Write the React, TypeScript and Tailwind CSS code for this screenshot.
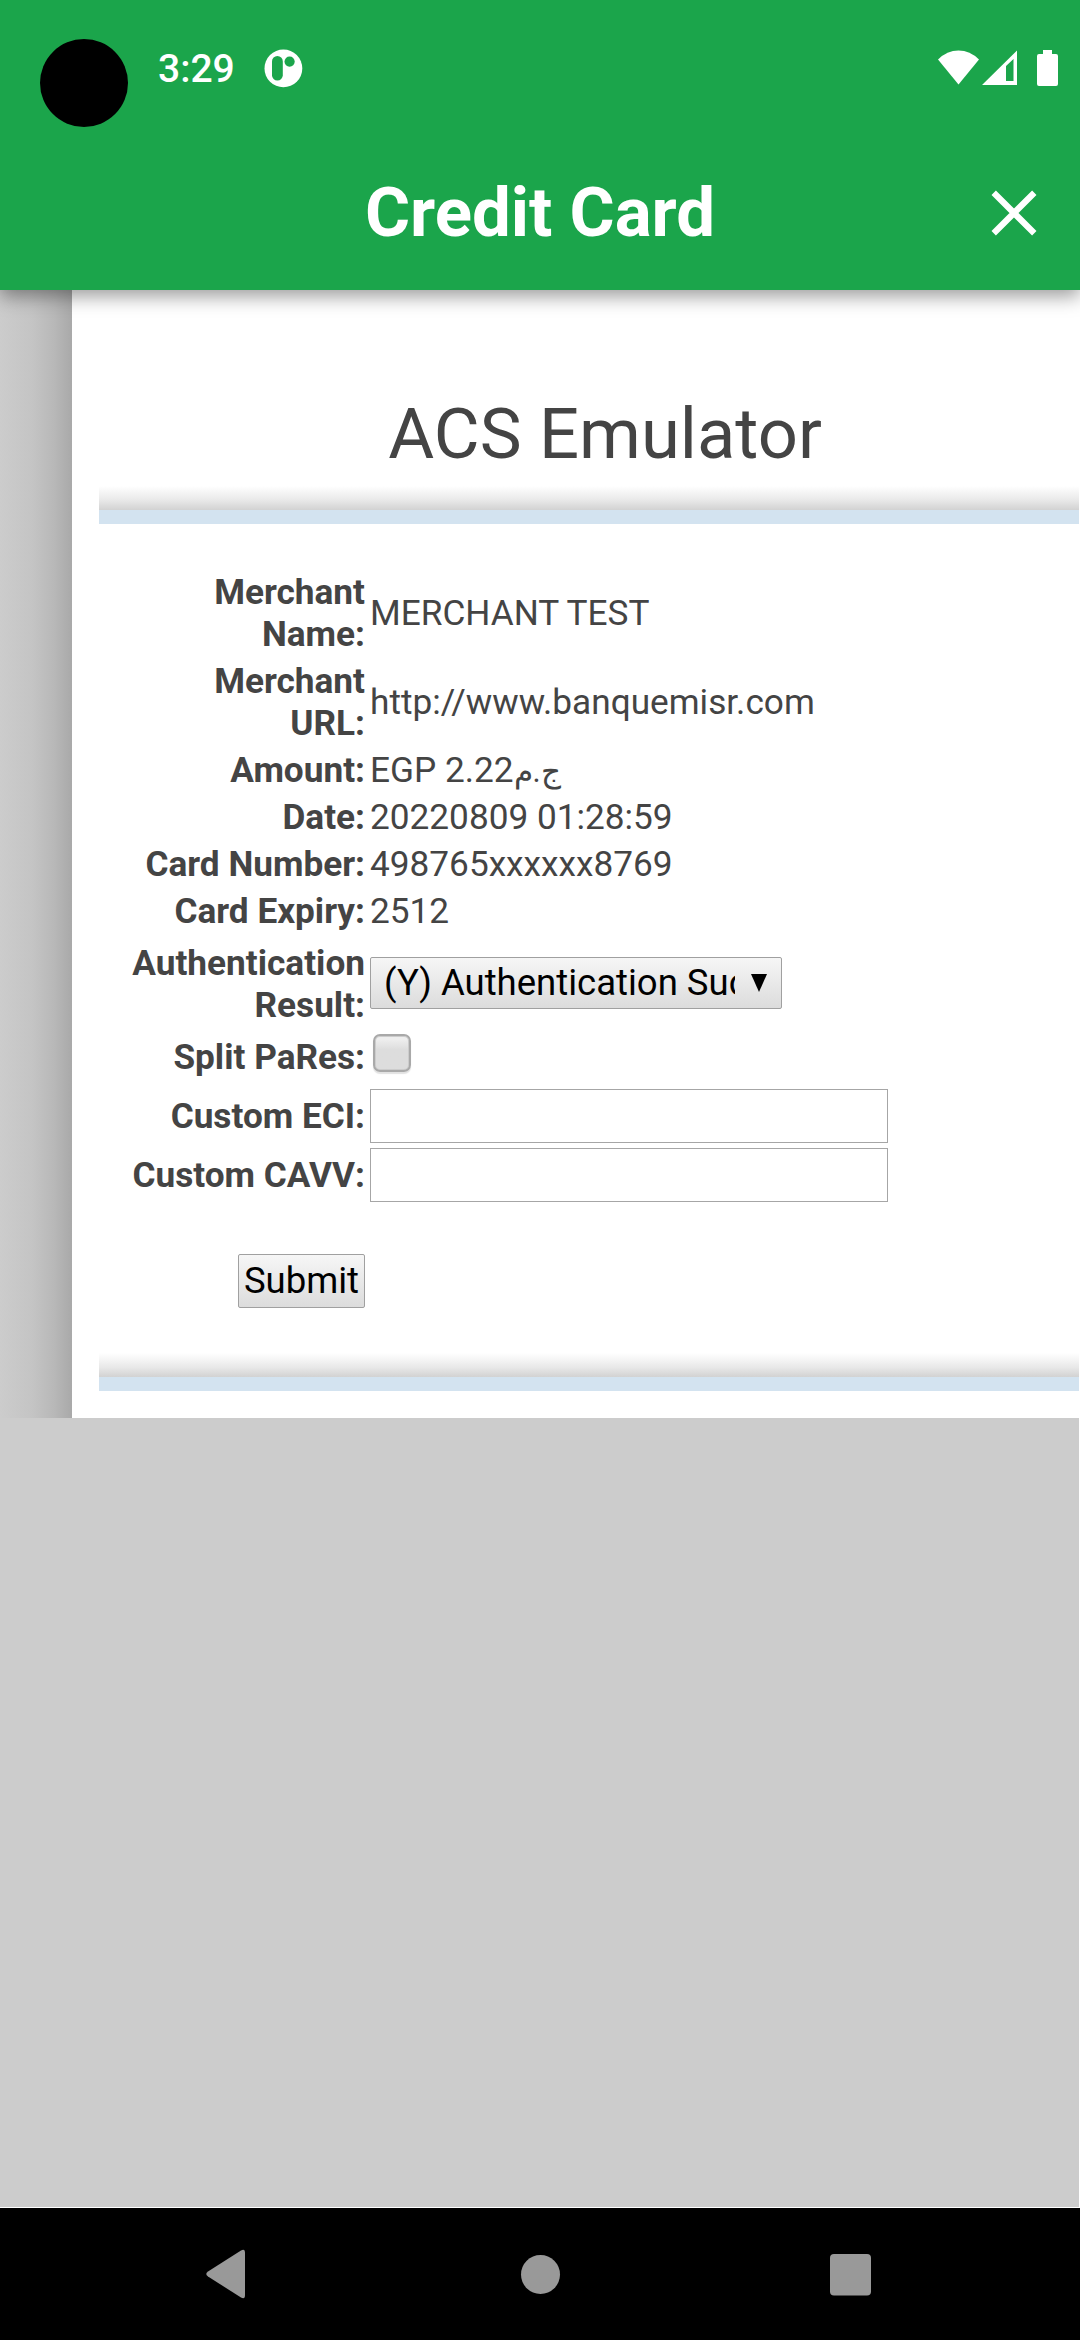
import type { ReactNode } from "react";

function StatusBar() {
  return (
    <div className="flex h-[137px] items-start text-white">
      <div className="ml-[40px] mt-[39px] size-[88px] rounded-full bg-black" />
      <span className="ml-[30px] mt-[46px] w-[76px] text-[39px] font-medium leading-[46px]">3:29</span>
      <svg className="ml-[30px] mt-[49px] h-[39px] w-[39px]" viewBox="0 0 39 39">
        <circle cx="19.4" cy="19.4" r="18.9" fill="#fff" />
        <rect x="8" y="7" width="10.8" height="24.6" rx="5.4" fill="#1ba54b" />
        <circle cx="25.6" cy="12.6" r="5.1" fill="#1ba54b" />
      </svg>
      <svg className="ml-auto mr-[20px] mt-[48px] h-[40px] w-[124px]" viewBox="0 0 124 40" fill="#fff">
        <path d="M2 11.500Q11 2.500 22.500 2.500T43 11.500L22.500 36.500Z" />
        <path fillRule="evenodd" d="M46 37L81 2.500V37ZM70 33H77.500V11L70 18Z" />
        <path d="M107 2h9v4h4q2 0 2 2v28q0 2-2 2h-17q-2 0-2-2V8q0-2 2-2h4z" />
      </svg>
    </div>
  );
}

function Divider() {
  return (
    <div className="ml-[27px] mr-px">
      <div className="h-[24px] bg-[linear-gradient(to_bottom,#ffffff_0%,#eeeeee_45%,#e8e8e8_60%,#d2d2d2_100%)]" />
      <div className="h-[14px] bg-[#d3e3f0]" />
    </div>
  );
}

function Row({ label, children, className = "items-center" }: { label: ReactNode; children: ReactNode; className?: string }) {
  return (
    <div className={`flex ${className}`}>
      <div className="w-[293px] shrink-0 text-right font-bold">{label}</div>
      <div className="ml-[5px] whitespace-nowrap">{children}</div>
    </div>
  );
}

export default function App() {
  return (
    <div className="flex h-[2340px] w-[1080px] flex-col overflow-hidden bg-white font-['Roboto',sans-serif]">
      <header className="relative z-10 h-[290px] bg-[#1ba54b] shadow-[0_6px_18px_rgba(0,0,0,0.4)]">
        <StatusBar />
        <div className="flex h-[152px] items-center justify-between pr-[43px] pl-[89px] text-white">
          <h1 className="w-[902px] shrink-0 text-center text-[69px] font-bold leading-[80px]">Credit Card</h1>
          <svg className="size-[46px] shrink-0" viewBox="0 0 46 46" stroke="#fff" strokeWidth="6.200">
            <path d="M2.700 2.700L43.300 43.300M43.300 2.700L2.700 43.300" />
          </svg>
        </div>
      </header>

      <main className="flex h-[1128px] shrink-0">
        <div className="w-[72px] shrink-0 bg-[linear-gradient(to_right,#cccccc_0%,#c4c4c4_45%,#b8b8b8_75%,#a9a9a9_100%)]" />
        <div className="flex flex-1 flex-col bg-white text-[#444444]">
          <h2 className="mt-[103px] ml-[58px] text-center text-[70.500px] leading-[82px]">ACS Emulator</h2>
          <div className="mt-[11px]">
            <Divider />
          </div>
          <form className="mt-[47px] flex flex-col gap-[5px] text-[35.200px] leading-[42px]">
            <Row label={<>Merchant<br />Name:</>}>MERCHANT TEST</Row>
            <Row label={<>Merchant<br />URL:</>}>http://www.banquemisr.com</Row>
            <Row label="Amount:">
              EGP 2.22<span className="text-[31px] leading-none">ج.م</span>
            </Row>
            <Row label="Date:">20220809 01:28:59</Row>
            <Row label="Card Number:">498765xxxxxx8769</Row>
            <Row label="Card Expiry:">2512</Row>
            <Row label={<>Authentication<br />Result:</>} className="h-[94px] items-center">
              <div className="mb-[2px] flex h-[52px] w-[412px] items-center rounded-[2px] border border-[#a0a0a0] bg-linear-to-b from-[#f6f6f6] to-[#dcdcdc] text-black">
                <span className="ml-[13px] w-[351px] overflow-hidden text-[36.500px]">(Y) Authentication Successful</span>
                <svg className="ml-[16px] h-[18px] w-[16px]" viewBox="0 0 16 18">
                  <path d="M0 0H16L8 18Z" />
                </svg>
              </div>
            </Row>
            <Row label="Split PaRes:" className="h-[48px] items-start">
              <div className="-mt-[2px] ml-[3px] size-[38px] rounded-[7px] border-2 border-[#a9a9a9] bg-linear-to-b from-[#eeeeee] from-10% to-[#dddddd] to-40% shadow-[inset_0_0_0_1px_#cccccc,0_2px_1px_#e2e2e2]" />
            </Row>
            <Row label="Custom ECI:">
              <input aria-label="Custom ECI" className="block h-[54px] w-[518px] border border-[#a6a6a6] bg-white" />
            </Row>
            <Row label="Custom CAVV:">
              <input aria-label="Custom CAVV" className="block h-[54px] w-[518px] border border-[#a6a6a6] bg-white" />
            </Row>
            <button
              type="button"
              className="mt-[47px] ml-[166px] h-[54px] w-[127px] rounded-[2px] border border-[#a0a0a0] bg-linear-to-b from-[#f6f6f6] to-[#dcdcdc] text-[36.500px] text-black"
            >
              Submit
            </button>
          </form>
          <div className="mt-[45px]">
            <Divider />
          </div>
        </div>
      </main>

      <div className="mr-px mb-px flex-1 bg-[#cccccc]" />

      <nav className="flex h-[132px] shrink-0 bg-black">
        <svg className="h-[132px] w-full" viewBox="0 0 1080 132" fill="#999999">
          <path d="M241 42.500Q245 40 245 45V87Q245 92 241 89.500L208 68.500Q204.500 66 208 63.500Z" />
          <circle cx="540.500" cy="66.500" r="19.500" />
          <rect x="830" y="46" width="41" height="41.500" rx="4" />
        </svg>
      </nav>
    </div>
  );
}
